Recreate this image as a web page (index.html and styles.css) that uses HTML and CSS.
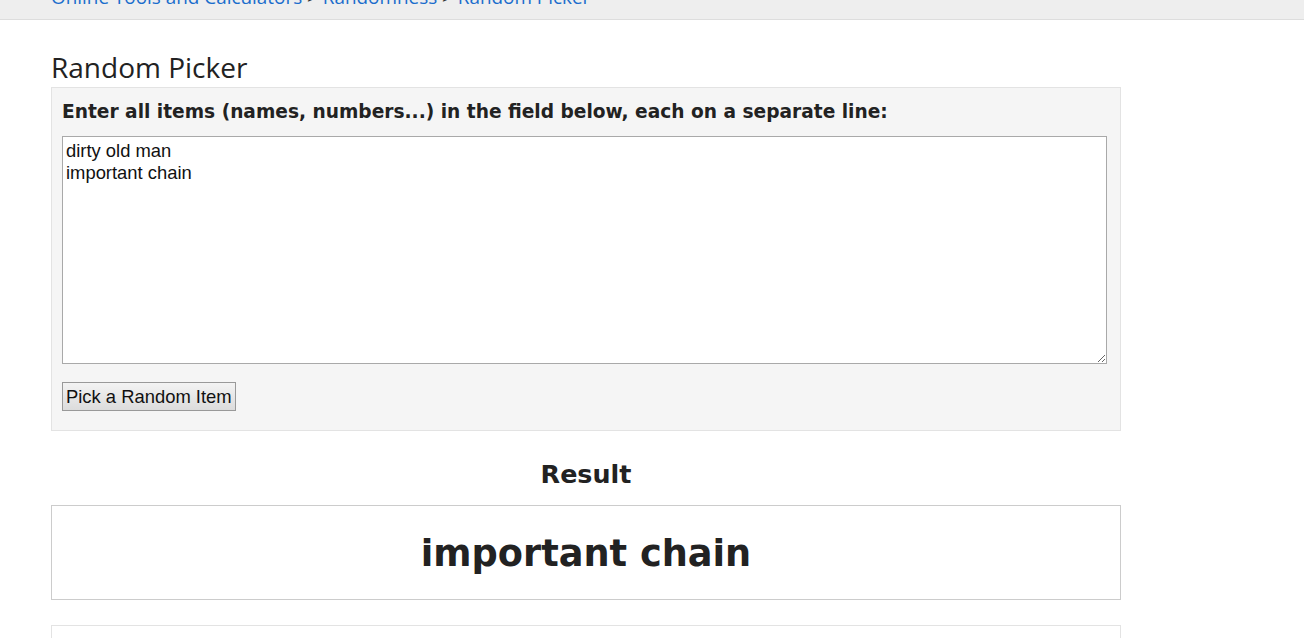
FILE: index.html
```html
<!DOCTYPE html>
<html>
<head>
<meta charset="utf-8">
<link rel="stylesheet" href="styles.css">
</head>
<body>
<div class="topbar">
  <div class="crumbs"><a href="#">Online Tools and Calculators</a> &gt; <a href="#">Randomness</a> &gt; <a href="#">Random Picker</a></div>
</div>
<main class="page">
  <h1 class="title">Random Picker</h1>
  <section class="panel">
    <label class="label">Enter all items (names, numbers...) in the field below, each on a separate line:</label>
    <textarea class="items">dirty old man
important chain</textarea>
    <button class="pick">Pick a Random Item</button>
  </section>
  <h2 class="result-title">Result</h2>
  <div class="result">important chain</div>
  <div class="next"></div>
</main>
</body>
</html>
```
FILE: styles.css
```css
html, body { margin: 0; padding: 0; background: #fff; overflow: hidden; }
body { font-family: "Open Sans", "Noto Sans", sans-serif; color: #222; }
.topbar {
  background: #eeeeee;
  border-bottom: 1px solid #dddddd;
  height: 20px;
  box-sizing: border-box;
  padding: 0 0 0 51px;
  overflow: hidden;
}
.crumbs {
  font-family: "Open Sans", sans-serif; font-size: 18.9px; color: #333;
  line-height: 24px; margin-top: -15px;
}
.crumbs a { color: #1a6dcc; text-decoration: none; }
.page { width: 1070px; margin-left: 51px; }
.title {
  font-family: "Open Sans", sans-serif;
  font-weight: 400; font-size: 28px; line-height: 36px;
  margin: 29px 0 2px 0; color: #222;
}
.panel {
  background: #f5f5f5;
  border: 1px solid #e3e3e3;
  padding: 11px 13px 19px 10px;
  display: flex; flex-direction: column; align-items: flex-start;
}
.label {
  font-family: "DejaVu Sans", sans-serif; font-weight: bold; font-size: 18.6px;
  line-height: 26px; margin-bottom: 11px; color: #222;
}
.items {
  width: 100%; height: 228px; box-sizing: border-box;
  border: 1px solid #a9a9a9; background: #fff;
  font-family: "Liberation Sans", Arial, sans-serif; font-size: 18.4px; line-height: 22px;
  padding: 3px 3px; resize: vertical; color: #111;
  margin: 0;
}
.pick {
  margin-top: 18px;
  font-family: "Liberation Sans", Arial, sans-serif; font-size: 18.4px;
  padding: 1px 3px; height: 29px;
  border: 1px solid #999; border-radius: 0;
  background: linear-gradient(#f3f3f3, #dcdcdc); color: #111;
}
.result-title {
  text-align: center; font-family: "DejaVu Sans", sans-serif;
  font-size: 25.4px; font-weight: bold; line-height: 30px;
  margin: 28px 0 16px 0; color: #222;
}
.result {
  border: 1px solid #cccccc; height: 95px; box-sizing: border-box;
  display: flex; align-items: center; justify-content: center;
  font-family: "DejaVu Sans", sans-serif; font-weight: bold; font-size: 36.7px; color: #222;
  padding-top: 2px;
}
.next { border: 1px solid #e3e3e3; height: 40px; margin-top: 25px; }
```
